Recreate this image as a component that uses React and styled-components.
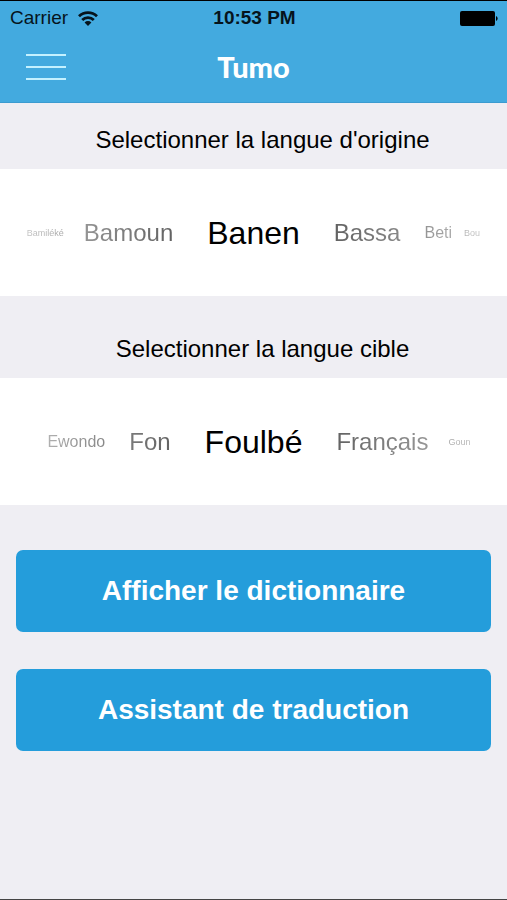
import React, {useState} from "react";
import styled, {createGlobalStyle} from "styled-components";

const GlobalStyle = createGlobalStyle`
    * {
        box-sizing: border-box;
    }

    body {
        margin: 0;
        background-color: #efeef3;
        color: #000;
        font-family: "Liberation Sans", Arial, sans-serif;
    }

    button {
        font-family: inherit;
        cursor: pointer;
    }
`;

const Screen = styled.div`
    display: flex;
    flex-direction: column;
    min-height: 100vh;
    border-top: 1px solid #000;
    border-bottom: 1px solid #444;
`;

const Header = styled.header`
    background-color: #43aadf;
    border-bottom: 1px solid #3b9bd0;
`;

const StatusBar = styled.div`
    display: grid;
    grid-template-columns: 1fr auto 1fr;
    align-items: center;
    height: 34px;
    padding: 0 8px 0 10px;
    font-size: 19px;
    color: #06141c;
`;

const Carrier = styled.div`
    display: flex;
    align-items: center;
    gap: 10px;
`;

const Clock = styled.time`
    font-weight: 700;
`;

const Battery = styled.svg`
    justify-self: end;
`;

const NavBar = styled.div`
    display: grid;
    grid-template-columns: 1fr auto 1fr;
    align-items: center;
    height: 67px;
    padding: 0 26px 4px;
`;

const MenuButton = styled.button`
    display: flex;
    flex-direction: column;
    justify-self: start;
    gap: 10px;
    width: 40px;
    padding: 0;
    border: none;
    background: none;
`;

const MenuLine = styled.span`
    height: 2px;
    background-color: #c4f1ff;
`;

const Title = styled.h1`
    margin: 0;
    font-family: Lato, "Open Sans", sans-serif;
    font-size: 29px;
    font-weight: 900;
    line-height: 36px;
    color: #fff;
`;

const Picker = styled.fieldset`
    min-width: 0;
    margin: 0;
    padding: 0;
    border: none;
`;

const PickerTitle = styled.legend`
    width: 100%;
    padding: ${({$top}) => $top}px 0 15px 18px;
    font-size: 24px;
    line-height: 28px;
    text-align: center;
`;

const Wheel = styled.div`
    display: grid;
    grid-template-columns: 1fr auto 1fr;
    align-items: center;
    gap: 18px;
    height: 127px;
    background-color: #fff;
`;

const Side = styled.div`
    display: flex;
    align-items: center;
    justify-content: ${({$before}) => $before ? 'flex-end' : 'flex-start'};
    min-width: 0;
    overflow: hidden;
    mask-image: linear-gradient(
        ${({$before}) => $before ? 'to left' : 'to right'},
        rgba(0, 0, 0, 0.65),
        rgba(0, 0, 0, 0.4) 60%,
        rgba(0, 0, 0, 0.15)
    );
`;

const levels = {
    center: {size: 32, padding: 0},
    near: {size: 24, padding: 16},
    far: {size: 16, padding: 8},
    edge: {size: 9, padding: 4},
};

const Language = styled.label`
    padding: 0 ${({$level}) => levels[$level].padding}px;
    font-size: ${({$level}) => levels[$level].size}px;
    line-height: 40px;
    white-space: nowrap;
    cursor: pointer;
`;

const Radio = styled.input`
    appearance: none;
    display: block;
    width: 0;
    height: 0;
    margin: 0;
`;

const Actions = styled.div`
    display: flex;
    flex-direction: column;
    gap: 37px;
    padding: 45px 16px;
`;

const ActionButton = styled.button`
    height: 82px;
    border: none;
    border-radius: 7px;
    background-color: #249ddb;
    color: #fff;
    font-size: 28px;
    font-weight: 700;
`;

const sourceLanguages = ['Bamiléké', 'Bamoun', 'Banen', 'Bassa', 'Beti', 'Bou'];
const targetLanguages = ['Ewondo', 'Fon', 'Foulbé', 'Français', 'Goun'];

// the more letters lie between a language and the center, the smaller it gets
const getLevel = (languages, index, center) => {
    if (index === center) {
        return 'center';
    }
    const between = index < center
        ? languages.slice(index, center)
        : languages.slice(center + 1, index + 1);
    const reach = between.join('').length;

    if (between.length === 1) {
        return 'near';
    }
    return reach < 11 ? 'far' : 'edge';
}

const LanguagePicker = ({name, title, top, languages, initial}) => {

    const [selected, setSelected] = useState(initial);
    const center = languages.indexOf(selected);

    const renderLanguage = (language) => (
        <Language
            key={language}
            $level={getLevel(languages, languages.indexOf(language), center)}
        >
            <Radio
                type="radio"
                name={name}
                value={language}
                checked={language === selected}
                onChange={() => setSelected(language)}
            />
            {language}
        </Language>
    );

    return (
        <Picker>
            <PickerTitle $top={top}>{title}</PickerTitle>
            <Wheel>
                <Side $before>{languages.slice(0, center).map(renderLanguage)}</Side>
                {renderLanguage(selected)}
                <Side>{languages.slice(center + 1).map(renderLanguage)}</Side>
            </Wheel>
        </Picker>
    )
}

const App = () => (
    <>
        <GlobalStyle/>
        <Screen>
            <Header>
                <StatusBar>
                    <Carrier>
                        <span>Carrier</span>
                        <svg width="20" height="15" viewBox="0 0 20 15" fill="none" stroke="currentColor" strokeWidth="2.8">
                            <path d="M1 5.2a13 13 0 0 1 18 0"/>
                            <path d="M4.2 9a8.2 8.2 0 0 1 11.6 0"/>
                            <path d="M10 15l-3.4-3.6a4.8 4.8 0 0 1 6.8 0z" fill="currentColor" stroke="none"/>
                        </svg>
                    </Carrier>
                    <Clock>10:53 PM</Clock>
                    <Battery width="39" height="15" viewBox="0 0 39 15">
                        <rect width="35" height="15" rx="2"/>
                        <path d="M36 5a3 2.8 0 0 1 0 5z"/>
                    </Battery>
                </StatusBar>
                <NavBar>
                    <MenuButton type="button" aria-label="Menu">
                        <MenuLine/>
                        <MenuLine/>
                        <MenuLine/>
                    </MenuButton>
                    <Title>Tumo</Title>
                </NavBar>
            </Header>
            <main>
                <LanguagePicker
                    name="source"
                    title="Selectionner la langue d'origine"
                    top={23}
                    languages={sourceLanguages}
                    initial="Banen"
                />
                <LanguagePicker
                    name="target"
                    title="Selectionner la langue cible"
                    top={39}
                    languages={targetLanguages}
                    initial="Foulbé"
                />
                <Actions>
                    <ActionButton type="button">Afficher le dictionnaire</ActionButton>
                    <ActionButton type="button">Assistant de traduction</ActionButton>
                </Actions>
            </main>
        </Screen>
    </>
);

export default App;
